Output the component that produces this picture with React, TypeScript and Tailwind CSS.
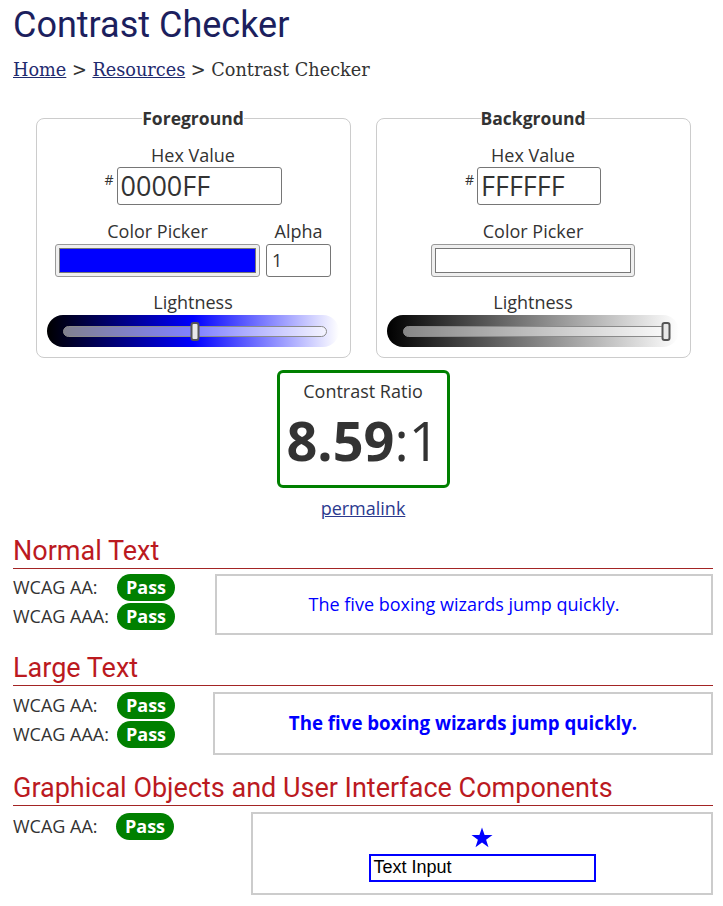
import React from "react";

const sans = "font-['Open_Sans',sans-serif]";
const roboto = "font-['Roboto',sans-serif]";

function Slider({
  gradient,
  position,
}: {
  gradient: string;
  position: number;
}): React.ReactElement {
  return (
    <div className={`relative mx-auto h-[32px] w-[292px] rounded-full ${gradient}`}>
      <div className="absolute left-[16px] right-[12px] top-[11px] h-[11px] rounded-full border border-[#8a8a8a] bg-white/50" />
      <div
        className="absolute top-[7px] h-[19px] w-[9px] -translate-x-1/2 rounded-[3px] border-2 border-[#555] bg-[#e8e8e8]"
        style={{ left: `${16 + position * 263}px` }}
      />
    </div>
  );
}

function ColorSwatch({ color, width }: { color: string; width: string }): React.ReactElement {
  return (
    <div className={`h-[33px] rounded-[3px] border border-[#999] bg-[#efefef] p-[3px] ${width}`}>
      <div className={`h-full w-full border border-[#777] ${color}`} />
    </div>
  );
}

function ColorPanel({
  title,
  hex,
  hexWidth,
  swatch,
  alpha,
  gradient,
  position,
}: {
  title: string;
  hex: string;
  hexWidth: string;
  swatch: string;
  alpha: boolean;
  gradient: string;
  position: number;
}): React.ReactElement {
  return (
    <fieldset className="w-[315px] rounded-lg border border-[#ccc] px-[10px] pb-[10px]">
      <legend className="mx-auto px-0 text-[17.5px] font-bold leading-[26px] text-[#333]">{title}</legend>
      <div className="mt-[11px] flex flex-col items-center">
        <span className="text-[18px] leading-[26px] text-[#333]">Hex Value</span>
        <div className="-mt-[1px] flex items-start">
          <span className="mr-[3px] mt-[5px] text-[14px] leading-[16px] text-[#333]">#</span>
          <div
            className={`flex h-[38px] items-center rounded-[3px] border border-[#767676] px-[3px] text-[27px] text-[#333] ${hexWidth}`}
          >
            {hex}
          </div>
        </div>
      </div>
      <div className="mt-[13px] flex justify-center gap-[6px]">
        <div className="flex flex-col items-center">
          <span className="text-[18px] leading-[26px] text-[#333]">Color Picker</span>
          <ColorSwatch color={swatch} width={alpha ? "w-[205px]" : "w-[204px]"} />
        </div>
        {alpha && (
          <div className="flex flex-col items-center">
            <span className="text-[18px] leading-[26px] text-[#333]">Alpha</span>
            <div className="flex h-[33px] w-[65px] items-center rounded-[3px] border border-[#767676] px-[5px] text-[18px] text-[#333]">
              1
            </div>
          </div>
        )}
      </div>
      <div className="mt-[12px] text-center text-[18px] leading-[26px] text-[#333]">Lightness</div>
      <Slider gradient={gradient} position={position} />
    </fieldset>
  );
}

function Badge(): React.ReactElement {
  return (
    <span className="inline-flex h-[27px] w-[58px] items-center justify-center rounded-full bg-[#008000] text-[18px] font-bold text-white">
      Pass
    </span>
  );
}

function ResultRow({ label }: { label: string }): React.ReactElement {
  return (
    <div className="flex h-[27px] items-center">
      <span className="w-[104px] text-[18px] text-[#333]">{label}</span>
      <Badge />
    </div>
  );
}

function SectionTitle({ children }: { children: React.ReactNode }): React.ReactElement {
  return (
    <h2
      className={`${roboto} border-b border-[#a32424] pb-[2px] text-[27px] leading-[30px] text-[#bb1a1f]`}
    >
      {children}
    </h2>
  );
}

export default function App(): React.ReactElement {
  return (
    <div className={`${sans} min-h-[906px] bg-white pl-[13px] pr-[10px] text-[#333]`}>
      <h1 className={`${roboto} pt-[5px] text-[36px] leading-[40px] text-[#1c1f5e]`}>
        Contrast Checker
      </h1>
      <nav className="mt-[12px] font-['DejaVu_Serif',serif] text-[17.7px] leading-[26px] text-[#333]">
        <a href="#" className="text-[#1f2a6e] underline">
          Home
        </a>{" "}
        &gt;{" "}
        <a href="#" className="text-[#1f2a6e] underline">
          Resources
        </a>{" "}
        &gt; Contrast Checker
      </nav>

      <div className="mt-[22px] flex justify-center gap-[25px]">
        <ColorPanel
          title="Foreground"
          hex="0000FF"
          hexWidth="w-[165px]"
          swatch="bg-[#0000ff]"
          alpha
          gradient="bg-[linear-gradient(to_right,#000_0%,#0000ff_50%,#ffffff_100%)]"
          position={0.5}
        />
        <ColorPanel
          title="Background"
          hex="FFFFFF"
          hexWidth="w-[124px]"
          swatch="bg-white"
          alpha={false}
          gradient="bg-[linear-gradient(to_right,#000_0%,#808080_50%,#ffffff_100%)]"
          position={1}
        />
      </div>

      <div className="mt-[12px] flex flex-col items-center">
        <div className="flex h-[118px] w-[173px] flex-col items-center rounded-md border-[3px] border-[#008000] pt-[5px]">
          <span className="text-[18px] leading-[26px]">Contrast Ratio</span>
          <span className="mt-[4px] text-[54px] leading-[64px]">
            <b>8.59</b>:1
          </span>
        </div>
        <a href="#" className="mt-[7px] text-[18px] leading-[26px] text-[#2b3a8f] underline">
          permalink
        </a>
      </div>

      <section className="mt-[15px]">
        <SectionTitle>Normal Text</SectionTitle>
        <div className="mt-[5px] flex">
          <div className="flex w-[202px] flex-col gap-[2px]">
            <ResultRow label="WCAG AA:" />
            <ResultRow label="WCAG AAA:" />
          </div>
          <div className="flex h-[61px] flex-1 items-center justify-center border-2 border-[#ccc] text-[18px] text-[#0000ff]">
            The five boxing wizards jump quickly.
          </div>
        </div>
      </section>

      <section className="mt-[18px]">
        <SectionTitle>Large Text</SectionTitle>
        <div className="mt-[6px] flex">
          <div className="flex w-[200px] flex-col gap-[2px]">
            <ResultRow label="WCAG AA:" />
            <ResultRow label="WCAG AAA:" />
          </div>
          <div className="flex h-[63px] flex-1 items-center justify-center border-2 border-[#ccc] text-[18.7px] font-bold text-[#0000ff]">
            The five boxing wizards jump quickly.
          </div>
        </div>
      </section>

      <section className="mt-[18px]">
        <SectionTitle>Graphical Objects and User Interface Components</SectionTitle>
        <div className="mt-[6px] flex">
          <div className="w-[238px] pt-[1px]">
            <div className="flex h-[26px] items-center">
              <span className="w-[103px] text-[18px] text-[#333]">WCAG AA:</span>
              <Badge />
            </div>
          </div>
          <div className="flex h-[83px] flex-1 flex-col items-center justify-center gap-[4px] border-2 border-[#ccc]">
            <svg width="24" height="24" viewBox="0 0 24 24" className="text-[#0000ff]">
              <polygon
                points="12,1.5 14.6,9 22.5,9 16.1,13.7 18.5,21.3 12,16.6 5.5,21.3 7.9,13.7 1.5,9 9.4,9"
                fill="currentColor"
              />
            </svg>
            <div className="flex h-[28px] w-[227px] items-center border-2 border-[#0000ff] px-[3px] font-['Liberation_Sans',sans-serif] text-[18px] text-black">
              Text Input
            </div>
          </div>
        </div>
      </section>
    </div>
  );
}
